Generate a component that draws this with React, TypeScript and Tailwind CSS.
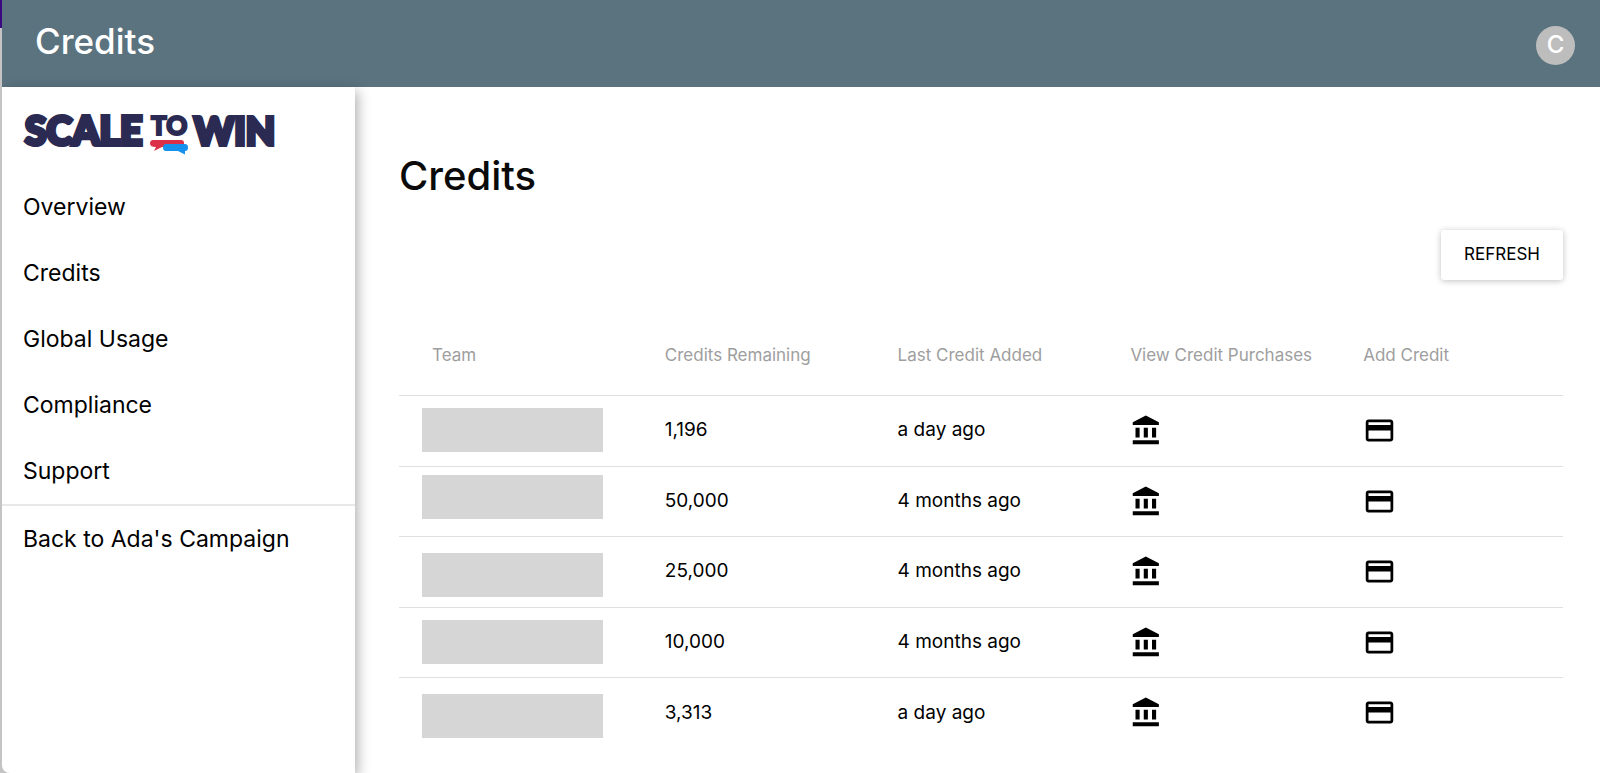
import { ReactNode } from "react";

interface ITeamCredit {
  id: number;
  remaining: string;
  lastAdded: string;
  nameClass: string;
}

const NAV_LINKS = [
  "Overview",
  "Credits",
  "Global Usage",
  "Compliance",
  "Support",
];

const COLUMNS = [
  "Team",
  "Credits Remaining",
  "Last Credit Added",
  "View Credit Purchases",
  "Add Credit",
];

const TEAMS: ITeamCredit[] = [
  { id: 1, remaining: "1,196", lastAdded: "a day ago", nameClass: "pt-3" },
  { id: 2, remaining: "50,000", lastAdded: "4 months ago", nameClass: "pt-2" },
  { id: 3, remaining: "25,000", lastAdded: "4 months ago", nameClass: "pt-4" },
  { id: 4, remaining: "10,000", lastAdded: "4 months ago", nameClass: "pt-3" },
  { id: 5, remaining: "3,313", lastAdded: "a day ago", nameClass: "pt-4" },
];

function Logo() {
  return (
    <svg
      width="260"
      height="44"
      viewBox="0 0 260 44"
      role="img"
      aria-label="Scale to Win"
      className="overflow-visible font-['Lato'] font-black"
    >
      <g fill="#2b2a52" stroke="#2b2a52" strokeWidth="4">
        <text x="2" y="34" fontSize="39">
          SCALE
        </text>
        <text x="128" y="24" fontSize="26" strokeWidth="2">
          TO
        </text>
        <text x="171" y="34" fontSize="38">
          WIN
        </text>
      </g>
      <path
        d="M130 29h28q3 0 3 3v1h-16q-3 0-4 3h-2l-8 4 2-4q-6 0-6-3.500t3-3.500z"
        fill="#dc3048"
      />
      <path
        d="M143 33h19q3 0 3 3.500t-3 3.500v3.500l-7-3.500h-12q-3 0-3-3.500t3-3.500z"
        fill="#1691ee"
      />
    </svg>
  );
}

function BankIcon() {
  return (
    <svg width="33" height="33" viewBox="0 0 24 24" fill="currentColor">
      <path d="M4 10v7h3v-7H4zm6 0v7h3v-7h-3zM2 22h19v-3H2v3zm14-12v7h3v-7h-3zm-4.500-9L2 6v2h19V6l-9.500-5z" />
    </svg>
  );
}

function CardIcon() {
  return (
    <svg width="33" height="33" viewBox="0 0 24 24" fill="currentColor">
      <path d="M20 4H4c-1.110 0-1.990.89-1.990 2L2 18c0 1.110.89 2 2 2h16c1.110 0 2-.89 2-2V6c0-1.110-.89-2-2-2zm0 14H4v-6h16v6zm0-10H4V6h16v2z" />
    </svg>
  );
}

function NavItem({ children }: { children: ReactNode }) {
  return (
    <li>
      <a href="#" className="flex h-[66px] items-center px-[21px]">
        {children}
      </a>
    </li>
  );
}

export default function App() {
  return (
    <div className="flex min-h-screen bg-[#c4c4c4] font-['Inter',sans-serif] text-black">
      <div className="w-[2px] shrink-0">
        <div className="h-7 bg-[#3b0a80]" />
      </div>
      <div className="flex min-w-0 flex-1 flex-col overflow-hidden rounded-bl-lg bg-white">
        <header className="flex h-[87px] shrink-0 items-center justify-between bg-[#5a737f] pr-[25px] pl-[33px] text-white">
          <p className="pb-1 text-[35px] font-medium">Credits</p>
          <button
            aria-label="Account"
            className="mt-[3px] flex size-[39px] items-center justify-center rounded-full bg-[#bdbdbd] text-2xl font-medium"
          >
            C
          </button>
        </header>

        <div className="flex flex-1">
          <aside className="relative w-[353px] shrink-0 bg-white shadow-[3px_4px_12px_rgba(0,0,0,0.3)]">
            <a href="#" className="block px-[21px] pt-6 pb-[19px]">
              <Logo />
            </a>
            <nav className="text-[23px]">
              <ul>
                {NAV_LINKS.map((link) => (
                  <NavItem key={link}>{link}</NavItem>
                ))}
              </ul>
              <ul className="border-t-2 border-[#e8e8e8]">
                <NavItem>Back to Ada's Campaign</NavItem>
              </ul>
            </nav>
          </aside>

          <main className="min-w-0 flex-1 pt-[59px] pr-[37px] pl-11">
            <h1 className="text-[40px] leading-[60px] font-medium text-[#0a0a0a]">
              Credits
            </h1>
            <div className="mt-6 flex justify-end">
              <button className="h-[50px] rounded-[3px] bg-white px-[23px] text-[17px] shadow-[0_1px_6px_rgba(0,0,0,0.25)]">
                REFRESH
              </button>
            </div>

            <table className="mt-[34px] w-full table-fixed border-collapse text-left">
              <thead>
                <tr className="h-[81px]">
                  {COLUMNS.map((column) => (
                    <th
                      key={column}
                      className="pt-[3px] pl-[33px] text-[17px] font-normal whitespace-nowrap text-[#9e9e9e]"
                    >
                      {column}
                    </th>
                  ))}
                </tr>
              </thead>
              <tbody className="text-[19px]">
                {TEAMS.map((team) => (
                  <tr
                    key={team.id}
                    className="border-t border-[#e0e0e0] odd:h-[71px] even:h-[70px]"
                  >
                    <td className={`pr-[29px] pl-[23px] align-top ${team.nameClass}`}>
                      <div className="h-11 bg-[#d6d6d6]" />
                    </td>
                    <td className="pl-[33px]">{team.remaining}</td>
                    <td className="pl-[33px]">{team.lastAdded}</td>
                    <td className="pl-[33px]">
                      <button aria-label="View credit purchases" className="block">
                        <BankIcon />
                      </button>
                    </td>
                    <td className="pl-[33px]">
                      <button aria-label="Add credit" className="block">
                        <CardIcon />
                      </button>
                    </td>
                  </tr>
                ))}
              </tbody>
            </table>
          </main>
        </div>
      </div>
    </div>
  );
}
